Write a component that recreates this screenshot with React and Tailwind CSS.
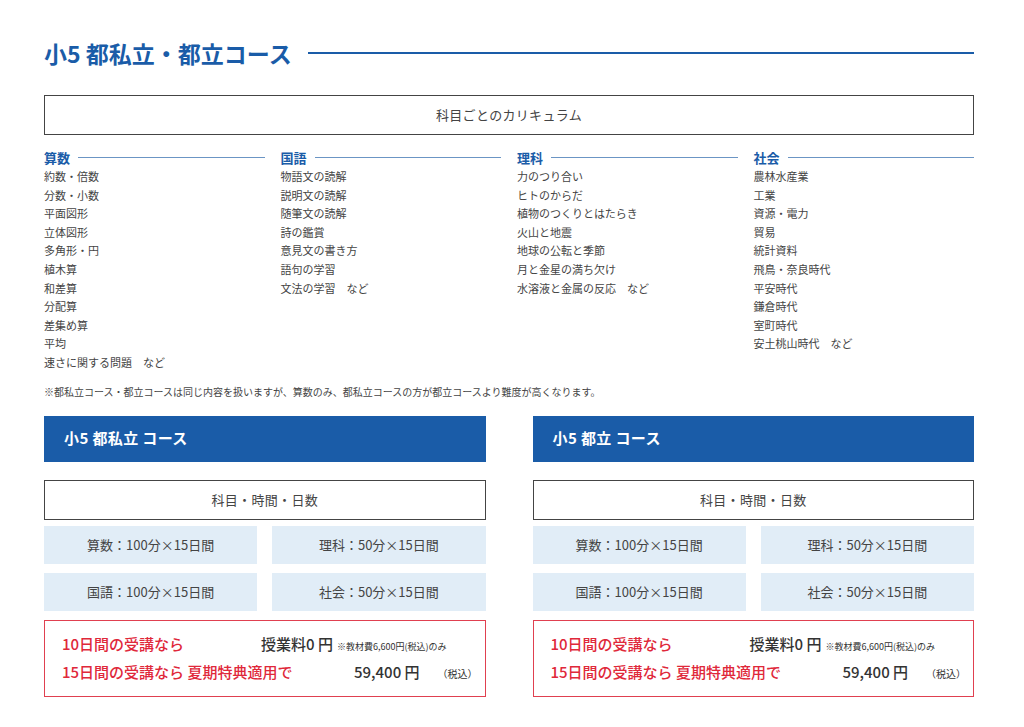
const F = { fontFamily: '"Noto Sans CJK JP", sans-serif' };
const cols = [
  ["算数", ["約数・倍数","分数・小数","平面図形","立体図形","多角形・円","植木算","和差算","分配算","差集め算","平均","速さに関する問題　など"]],
  ["国語", ["物語文の読解","説明文の読解","随筆文の読解","詩の鑑賞","意見文の書き方","語句の学習","文法の学習　など"]],
  ["理科", ["力のつり合い","ヒトのからだ","植物のつくりとはたらき","火山と地震","地球の公転と季節","月と金星の満ち欠け","水溶液と金属の反応　など"]],
  ["社会", ["農林水産業","工業","資源・電力","貿易","統計資料","飛鳥・奈良時代","平安時代","鎌倉時代","室町時代","安土桃山時代　など"]],
];
function Course({ title }) {
  return (
    <div className="flex flex-col">
      <div className="h-[46px] bg-[#1a5ca8] text-white text-[15px] font-bold flex items-center pl-[20px] tracking-wide">{title}</div>
      <div className="mt-[18px] h-[40px] border border-[#444] flex items-center justify-center text-[13px] text-[#444] tracking-wide">科目・時間・日数</div>
      <div className="grid grid-cols-2 gap-x-[15px] gap-y-[9px] mt-[6px]">
        {["算数：100分×15日間","理科：50分×15日間","国語：100分×15日間","社会：50分×15日間"].map(t => (
          <div key={t} className="h-[38px] bg-[#e1edf7] flex items-center justify-center text-[13px] text-[#444]">{t}</div>
        ))}
      </div>
      <div className="mt-[9px] h-[77px] border border-[#e04050] pl-[17px] flex flex-col justify-center gap-[6px] whitespace-nowrap">
        <div className="flex items-baseline">
          <span className="text-[#e0283a] text-[15px] font-medium w-[199px]">10日間の受講なら</span>
          <span className="text-[#333] text-[15px] font-medium">授業料0 円</span>
          <span className="text-[#333] text-[9px] ml-[4px]">※教材費6,600円(税込)のみ</span>
        </div>
        <div className="flex items-baseline">
          <span className="text-[#e0283a] text-[15px] font-medium w-[292px]">15日間の受講なら 夏期特典適用で</span>
          <span className="text-[#333] text-[15px] font-medium">59,400 円</span>
          <span className="text-[#333] text-[10px] ml-[18px]">（税込）</span>
        </div>
      </div>
    </div>
  );
}
export default function App() {
  return (
    <div style={F} className="w-[1024px] h-[727px] bg-white px-[44px] pt-[36px] box-border">
      <div className="w-[930px]">
        <div className="flex items-center gap-[16px]">
          <h1 className="text-[23px] font-bold text-[#1a5ca8] whitespace-nowrap">小5 都私立・都立コース</h1>
          <div className="flex-1 h-[2px] bg-[#1a5ca8]" />
        </div>
        <div className="mt-[24px] h-[40px] border border-[#444] flex items-center justify-center text-[13px] text-[#444] tracking-wide">科目ごとのカリキュラム</div>
        <div className="grid grid-cols-4 gap-x-[16px] mt-[13px]">
          {cols.map(([h, items]) => (
            <div key={h}>
              <div className="flex items-center gap-[8px]">
                <span className="text-[13px] font-bold text-[#1a5ca8]">{h}</span>
                <div className="flex-1 h-px bg-[#6b95c4]" />
              </div>
              <div>
                {items.map(i => <div key={i} className="text-[11px] leading-[18.6px] text-[#444]">{i}</div>)}
              </div>
            </div>
          ))}
        </div>
        <div className="mt-[12px] text-[10px] text-[#444]">※都私立コース・都立コースは同じ内容を扱いますが、算数のみ、都私立コースの方が都立コースより難度が高くなります。</div>
        <div className="grid grid-cols-2 gap-x-[47px] mt-[17px]">
          <Course title="小5 都私立 コース" />
          <Course title="小5 都立 コース" />
        </div>
      </div>
    </div>
  );
}
